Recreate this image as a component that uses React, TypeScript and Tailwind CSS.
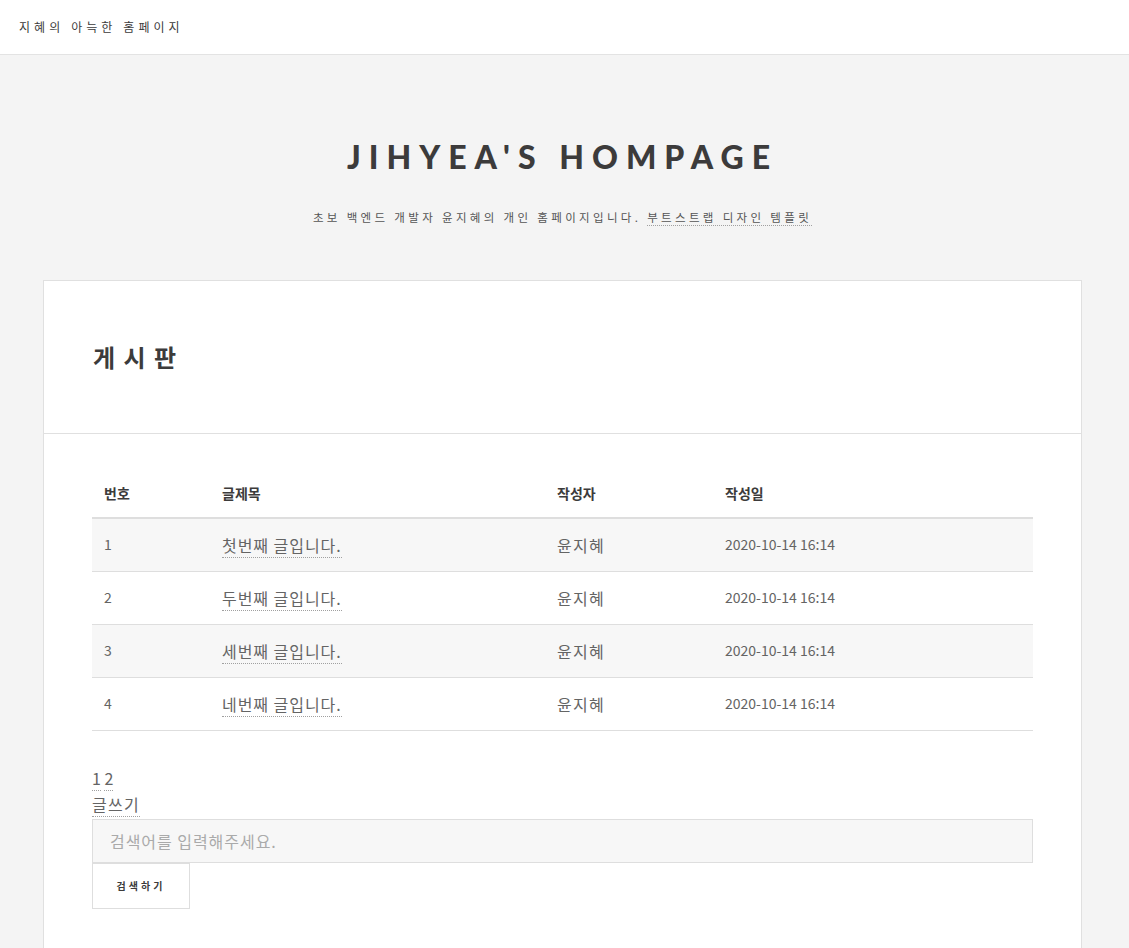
import React from 'react'

const body = '"Noto Sans CJK KR", "Noto Sans", sans-serif'

const posts = [
  { no: 1, title: '첫번째 글입니다.', author: '윤지혜', date: '2020-10-14 16:14' },
  { no: 2, title: '두번째 글입니다.', author: '윤지혜', date: '2020-10-14 16:14' },
  { no: 3, title: '세번째 글입니다.', author: '윤지혜', date: '2020-10-14 16:14' },
  { no: 4, title: '네번째 글입니다.', author: '윤지혜', date: '2020-10-14 16:14' },
]

export default function App() {
  return (
    <div className="min-h-screen bg-[#f4f4f4] text-[#646464]" style={{ fontFamily: body }}>
      {/* 상단 바 */}
      <header className="h-[55px] bg-white border-b border-[#e3e3e3] flex items-center pl-[19px]">
        <span className="text-[12px] tracking-[0.34em] text-[#3c3b3b]">지혜의 아늑한 홈페이지</span>
      </header>

      {/* 인트로 */}
      <div className="pt-[82px] text-center">
        <h1
          className="text-[32px] leading-[40px] font-black tracking-[0.25em] text-[#3c3b3b] pr-[4px]"
          style={{ fontFamily: 'Lato, "Noto Sans", sans-serif' }}
        >
          JIHYEA'S HOMPAGE
        </h1>
        <p className="mt-[30px] pr-[4px] text-[11.5px] leading-[20px] tracking-[0.29em] text-[#555]">
          초보 백엔드 개발자 윤지혜의 개인 홈페이지입니다.{' '}
          <a className="border-b border-dotted border-[#a0a0a0]">부트스트랩 디자인 템플릿</a>
        </p>
      </div>

      {/* 게시판 카드 */}
      <section className="mt-[53px] ml-[43px] w-[1039px] bg-white border border-[#e0e0e0] border-b-0">
        <div className="h-[153px] border-b border-[#e0e0e0] flex items-center px-[49px]">
          <h2 className="text-[24px] font-bold tracking-[0.35em] text-[#3c3b3b]">게시판</h2>
        </div>

        <div className="px-12 pt-[47px] pb-12">
          <table className="w-full border-collapse text-left">
            <thead>
              <tr className="border-b-2 border-[#dedede]">
                <th className="w-[118px] px-3 pb-3 leading-[24px] text-[14px] font-bold text-[#3c3b3b]">번호</th>
                <th className="w-[335px] px-3 pb-3 leading-[24px] text-[14px] font-bold text-[#3c3b3b]">글제목</th>
                <th className="w-[168px] px-3 pb-3 leading-[24px] text-[14px] font-bold text-[#3c3b3b]">작성자</th>
                <th className="px-3 pb-3 leading-[24px] text-[14px] font-bold text-[#3c3b3b]">작성일</th>
              </tr>
            </thead>
            <tbody>
              {posts.map((p, i) => (
                <tr key={p.no} className={`border-b border-[#dedede] ${i % 2 === 0 ? 'bg-[#f7f7f7]' : 'bg-white'}`}>
                  <td className="h-[53px] px-3 text-[14px]">{p.no}</td>
                  <td className="px-3 text-[16px] tracking-[0.06em]">
                    <a className="border-b border-dotted border-[#a0a0a0]">{p.title}</a>
                  </td>
                  <td className="px-3 text-[16px] tracking-[0.08em]">{p.author}</td>
                  <td className="px-3 text-[14px]">{p.date}</td>
                </tr>
              ))}
            </tbody>
          </table>

          <div className="mt-[34px] text-[16px] leading-[26px]">
            <div>
              <a className="border-b border-dotted border-[#a0a0a0]">1</a>{' '}
              <a className="border-b border-dotted border-[#a0a0a0]">2</a>
            </div>
            <div>
              <a className="border-b border-dotted border-[#a0a0a0] tracking-[0.08em]">글쓰기</a>
            </div>
          </div>

          <div className="mt-[2px]">
            <input
              className="w-full h-[44px] bg-[#f7f7f7] border border-[#dedede] pl-[17px] text-[16px] tracking-[0.06em] placeholder:text-[#aaaaaa] outline-none"
              placeholder="검색어를 입력해주세요."
            />
            <button className="w-[98px] h-[46px] bg-white border border-[#dedede] text-[10px] font-bold tracking-[0.3em] text-[#3c3b3b]">
              검색하기
            </button>
          </div>
        </div>
      </section>
    </div>
  )
}
